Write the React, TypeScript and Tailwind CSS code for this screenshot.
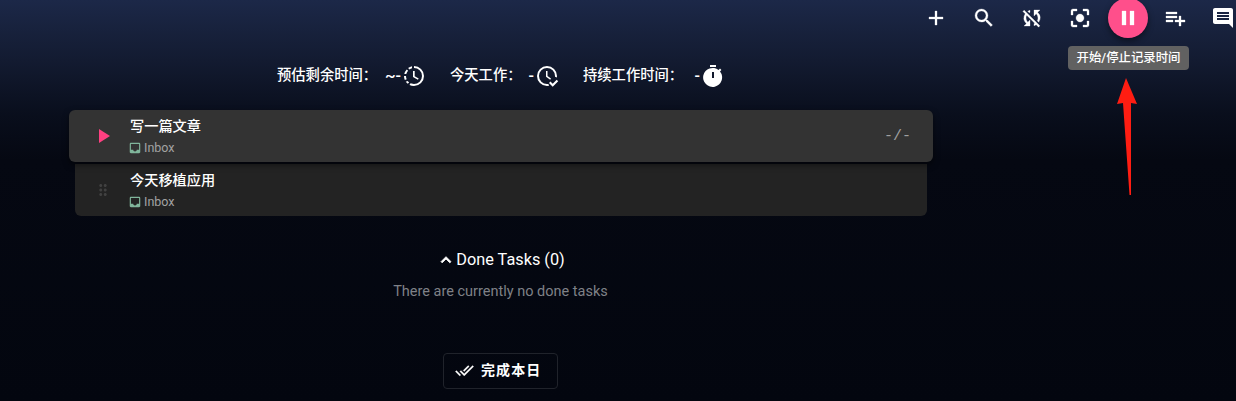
import type { ReactNode } from "react";
import {
  MdAdd,
  MdCenterFocusStrong,
  MdComment,
  MdDoneAll,
  MdDragIndicator,
  MdExpandLess,
  MdInbox,
  MdPause,
  MdPlayArrow,
  MdPlaylistAdd,
  MdSearch,
  MdSyncDisabled,
} from "react-icons/md";

interface StatProps {
  readonly label: string;
  readonly value: string;
  readonly className: string;
  readonly children: ReactNode;
}

function Stat({ label, value, className, children }: StatProps) {
  return (
    <div className={`flex h-6 items-center whitespace-nowrap ${className}`}>
      <span>{label}</span>
      <span className="mr-px ml-auto text-base">{value}</span>
      <svg viewBox="0 0 24 24" className="size-6 shrink-0" fill="currentColor">
        {children}
      </svg>
    </div>
  );
}

interface TaskProps {
  readonly title: string;
  readonly current?: boolean;
}

function Task({ title, current = false }: TaskProps) {
  return (
    <div
      className={
        current
          ? "relative flex h-[52px] w-[864px] rounded-md bg-[#333333] pl-[22px] shadow-[0_3px_6px_rgba(0,0,0,0.5)]"
          : "mx-1.5 mt-0.5 flex h-[52px] rounded-b-md bg-[#232323] pl-4"
      }
    >
      <div className="flex w-6 items-center justify-center">
        {current ? (
          <MdPlayArrow size={24} className="text-[#ff4081]" />
        ) : (
          <MdDragIndicator size={18} className="text-[#414141]" />
        )}
      </div>
      <div className="ml-[15px] pt-1.5">
        <p className="text-[14.2px] leading-5 font-medium text-white">{title}</p>
        <p className="mt-[3px] flex h-[18px] items-center gap-0.5 text-[12.5px] text-[#a2a2a2]">
          <MdInbox size={14} className="-ml-0.5 text-[#80b59b]" />
          Inbox
        </p>
      </div>
      {current && (
        <span className="mr-[22px] ml-auto self-center pt-0.5 font-['Liberation_Mono',monospace] text-[15px] text-[#a0a0a0]">
          -/-
        </span>
      )}
    </div>
  );
}

export default function App() {
  return (
    <main className="relative h-[401px] w-[1236px] overflow-hidden bg-[linear-gradient(180deg,#1c2848_0px,#131b31_60px,#090e1c_115px,#050812_160px,#03060f_401px)] font-[Roboto,'Noto_Sans_CJK_SC',sans-serif] text-white">
      <header className="flex h-9 items-center pl-[924px]">
        <div className="flex items-center gap-6 [&_path:last-child]:stroke-[0.3]">
          <MdAdd size={24} />
          <MdSearch size={24} />
          <MdSyncDisabled size={24} />
          <MdCenterFocusStrong size={24} />
        </div>
        <button className="ml-4 flex size-10 shrink-0 items-center justify-center rounded-full bg-[#ff4f8b] shadow-[0_3px_6px_rgba(0,0,0,0.45)]">
          <MdPause size={24} className="[&>path:last-child]:stroke-[0.3]" />
        </button>
        <MdPlaylistAdd size={24} className="ml-[15px] shrink-0 [&>path:last-child]:stroke-[0.3]" />
        <MdComment size={24} className="ml-6 shrink-0" />
      </header>

      <div className="absolute top-[46px] left-[1068px] flex h-6 w-[121px] items-center justify-center rounded bg-[#616161] text-[12.4px] font-medium whitespace-nowrap">
        开始/停止记录时间
      </div>
      <svg className="absolute top-[77px] left-[1116px]" width="22" height="119" fill="#ff1d12">
        <path d="M10 1 21 27 15 26 15 118H13.5L7 26 1 27Z" />
      </svg>

      <section className="flex pt-7 pl-[277px] text-[14.3px] font-medium">
        <Stat label="预估剩余时间：" value="~-" className="w-[149px]">
          <path d="M12 2a10 10 0 0 1 0 20v-2a8 8 0 0 0 0-16zM10 2.2v2A8 8 0 0 0 7.5 5.4L6.1 4A10 10 0 0 1 10 2.2M4.7 5.4l1.4 1.4A8 8 0 0 0 4.3 10h-2a10 10 0 0 1 2.4-4.6M2 12h2a8 8 0 0 0 .7 3.2l-1.9.7A10 10 0 0 1 2 12m3.7 5 1.4 1.4-1.4 1.4-2-2.1zM8.5 19.2l3.5.8v2a10 10 0 0 1-4.5-1zM11 7h1.7v5.2l4 2.4-.8 1.2-4.9-2.8z" />
        </Stat>
        <Stat label="今天工作：" value="-" className="ml-6 w-[109px]">
          <path d="M12 2a10 10 0 0 1 10 10l-.1 1.5-1.9-.7V12a8 8 0 1 0-8 8l1.4-.1.7 1.9L12 22A10 10 0 1 1 12 2m-1 5h1.5v5l3.5 2.5-.8 1.2-4.2-3zM17.7 22.8 14 19l1.5-1.5 2.2 2.2 4-4 1.5 1.5z" />
        </Stat>
        <Stat label="持续工作时间：" value="-" className="ml-6 w-[142px]">
          <path d="M9 1h6v2H9zM19 7.4l1.4-1.4A11 11 0 0 0 19 4.6L17.6 6A9.5 9.5 0 1 0 19 7.4M13 14h-2V8h2z" />
        </Stat>
      </section>

      <section className="pt-[22px] pl-[69px]">
        <Task title="写一篇文章" current />
        <div className="w-[864px]">
          <Task title="今天移植应用" />
        </div>
      </section>

      <section className="flex w-[1001px] flex-col items-center pt-8">
        <h2 className="flex h-6 items-center text-[16.3px]">
          <MdExpandLess size={20} className="[&>path:last-child]:stroke-1" />
          Done Tasks (0)
        </h2>
        <p className="mt-2.5 text-[14.5px] leading-5 text-[#7f8187]">There are currently no done tasks</p>
        <button className="mt-[51px] flex h-9 w-[115px] items-center rounded border border-[#20232b] pb-0.5 pl-[11px] text-sm font-bold tracking-[1.1px] whitespace-nowrap">
          <MdDoneAll size={19} className="mr-[7px] shrink-0 [&>path:last-child]:stroke-[0.3]" />
          完成本日
        </button>
      </section>
    </main>
  );
}
